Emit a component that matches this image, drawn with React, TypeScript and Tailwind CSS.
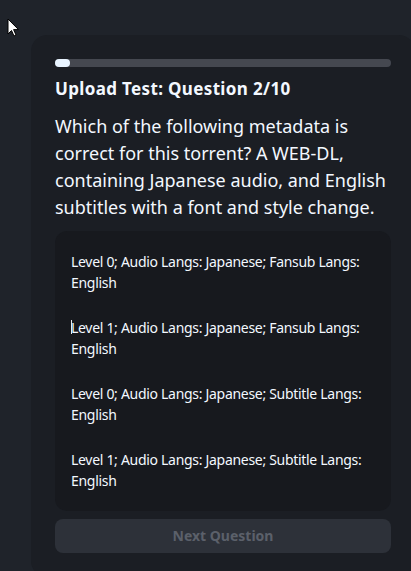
const options = [
  "Level 0; Audio Langs: Japanese; Fansub Langs: English",
  "Level 1; Audio Langs: Japanese; Fansub Langs: English",
  "Level 0; Audio Langs: Japanese; Subtitle Langs: English",
  "Level 1; Audio Langs: Japanese; Subtitle Langs: English",
];

export default function App() {
  return (
    <div
      className="relative h-[571px] w-[411px] overflow-hidden bg-[#1f232a] text-[#f3f8ff]"
      style={{ fontFamily: '"Noto Sans", "Open Sans", sans-serif' }}
    >
      {/* mouse pointer */}
      <svg className="absolute left-[7px] top-[18px]" width="13" height="20" viewBox="0 0 13 20">
        <path d="M1 1 L1 16 L4.5 12.5 L7 18 L9 17 L6.6 11.6 L11.5 11.6 Z" fill="#fff" stroke="#000" strokeWidth="1" />
      </svg>

      <div className="ml-[31px] mt-[35px] w-[384px] rounded-2xl bg-[#1b1e24] p-6">
        <div className="h-2 w-full rounded-full bg-[#454850]">
          <div className="h-2 w-[15px] rounded-full bg-[#e8f4ff]" />
        </div>

        <h1 className="mt-2.5 text-[17px] font-bold leading-6 tracking-[0.35px]">Upload Test: Question 2/10</h1>

        <p className="mt-3 text-[18px] leading-[27px]">
          Which of the following metadata is correct for this torrent? A WEB-DL, containing Japanese audio, and
          English subtitles with a font and style change.
        </p>

        <div className="mt-2.5 rounded-xl bg-[#17191e] p-2">
          {options.map((o, i) => (
            <div key={i} className="relative px-2 py-3 text-sm leading-[21px] tracking-[-0.3px]">
              {i === 1 && <span className="absolute left-2 top-[15px] h-[14px] w-px bg-[#e8eef5]" />}
              {o}
            </div>
          ))}
        </div>

        <button className="mt-2 h-[34px] w-full rounded-lg bg-[#2d3139] text-sm font-bold text-[#5b606a]">
          Next Question
        </button>
      </div>
    </div>
  );
}
